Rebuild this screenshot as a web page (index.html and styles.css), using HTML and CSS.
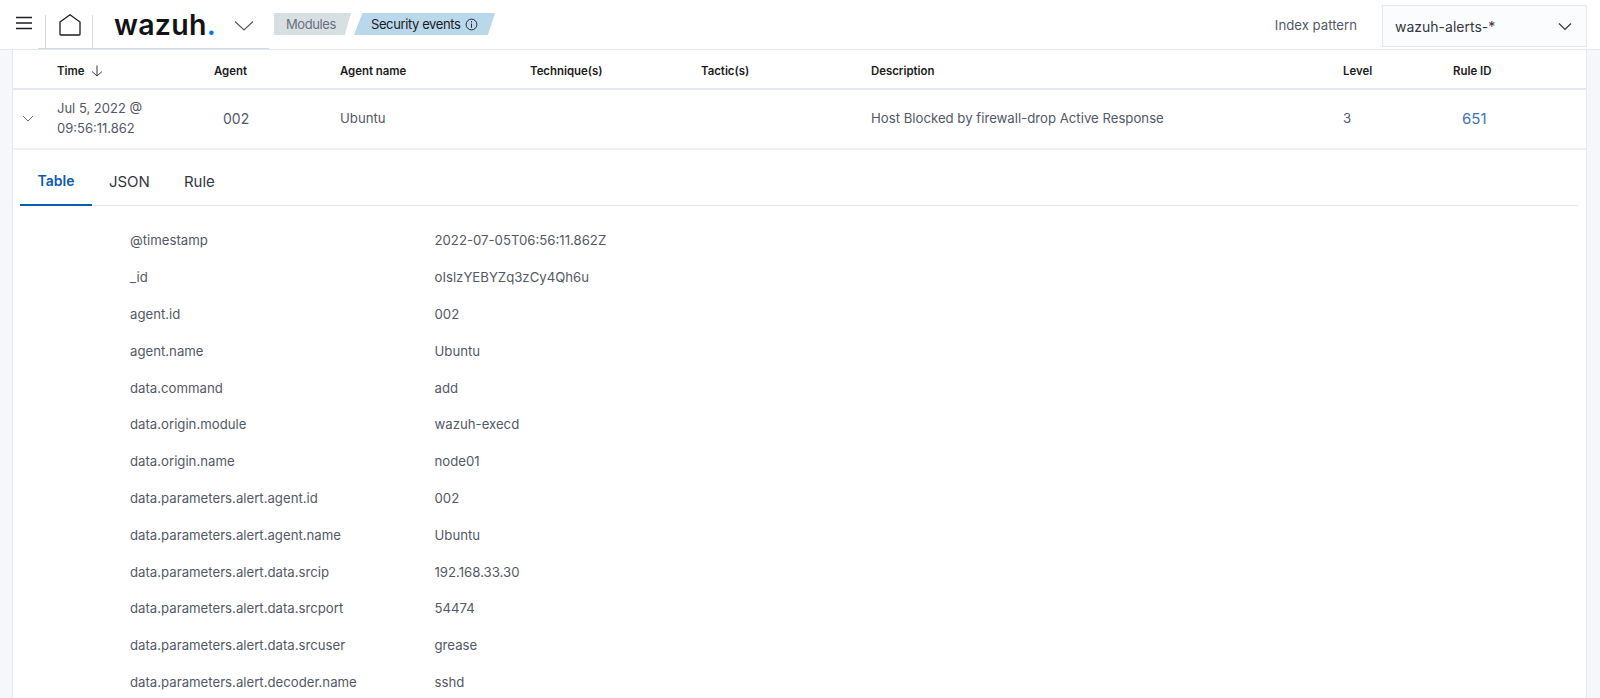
FILE: index.html
```html
<!DOCTYPE html>
<html>
<head>
  <title>Security events</title>
  <link rel="stylesheet" href="styles.css">
</head>
<body>
  <div class="header">
    <div class="header-left">
      <button class="menu-button" aria-label="Menu">
        <svg width="18" height="14" viewBox="0 0 18 14"><path d="M1 1.500h16M1 7h16M1 12.500h16" stroke="#1a1c21" stroke-width="1.700" fill="none"/></svg>
      </button>
      <div class="home-group">
        <div class="home-cell">
          <svg width="22" height="22" viewBox="0 0 22 22"><path d="M1 8 11 .8 21 8v12.200a.8.8 0 0 1-.8.8H1.800a.8.8 0 0 1-.8-.8z" stroke="#1a1c21" stroke-width="1.300" fill="none"/></svg>
        </div>
        <div class="logo-cell"><span class="logo">wazuh<span class="logo-dot">.</span></span></div>
        <svg class="logo-arrow" width="20" height="12" viewBox="0 0 20 12"><path d="M1 1.500 10 10l9-8.500" stroke="#535966" stroke-width="1.200" fill="none"/></svg>
      </div>
      <div class="crumbs">
        <span class="crumb crumb-first">Modules</span>
        <span class="crumb crumb-last">Security events
          <svg width="13" height="13" viewBox="0 0 14 14"><circle cx="7" cy="7" r="5.800" stroke="#1a1c21" fill="none"/><path d="M7 6v4.500M7 3.300v1.500" stroke="#1a1c21" fill="none"/></svg>
        </span>
      </div>
    </div>
    <div class="header-right">
      <span class="index-label">Index pattern</span>
      <div class="index-select">
        <span>wazuh-alerts-*</span>
        <svg width="14" height="9" viewBox="0 0 14 9"><path d="M1 1.500 7 7.500l6-6" stroke="#343741" stroke-width="1.200" fill="none"/></svg>
      </div>
    </div>
  </div>

  <div class="page">
    <div class="panel">
      <div class="table-row table-head">
        <div></div>
        <div class="sort-cell">Time
          <svg width="12" height="12" viewBox="0 0 12 12"><path d="M6 .5v10.500M1 6.500 6 11l5-4.500" stroke="#343741" fill="none"/></svg>
        </div>
        <div>Agent</div>
        <div>Agent name</div>
        <div>Technique(s)</div>
        <div>Tactic(s)</div>
        <div>Description</div>
        <div>Level</div>
        <div>Rule ID</div>
      </div>
      <div class="table-row table-body">
        <div class="expand-cell">
          <svg width="12" height="7" viewBox="0 0 12 7"><path d="M1 1l5 5 5-5" stroke="#69707d" fill="none"/></svg>
        </div>
        <div class="time-cell">Jul 5, 2022 @<br>09:56:11.862</div>
        <div class="agent-cell">002</div>
        <div>Ubuntu</div>
        <div></div>
        <div></div>
        <div>Host Blocked by firewall-drop Active Response</div>
        <div>3</div>
        <div class="rule-cell">651</div>
      </div>

      <div class="tabs">
        <div class="tab tab-active">Table</div>
        <div class="tab">JSON</div>
        <div class="tab">Rule</div>
      </div>

      <div class="fields">
        <div class="field"><span>@timestamp</span><span>2022-07-05T06:56:11.862Z</span></div>
        <div class="field"><span>_id</span><span>oIslzYEBYZq3zCy4Qh6u</span></div>
        <div class="field"><span>agent.id</span><span>002</span></div>
        <div class="field"><span>agent.name</span><span>Ubuntu</span></div>
        <div class="field"><span>data.command</span><span>add</span></div>
        <div class="field"><span>data.origin.module</span><span>wazuh-execd</span></div>
        <div class="field"><span>data.origin.name</span><span>node01</span></div>
        <div class="field"><span>data.parameters.alert.agent.id</span><span>002</span></div>
        <div class="field"><span>data.parameters.alert.agent.name</span><span>Ubuntu</span></div>
        <div class="field"><span>data.parameters.alert.data.srcip</span><span>192.168.33.30</span></div>
        <div class="field"><span>data.parameters.alert.data.srcport</span><span>54474</span></div>
        <div class="field"><span>data.parameters.alert.data.srcuser</span><span>grease</span></div>
        <div class="field"><span>data.parameters.alert.decoder.name</span><span>sshd</span></div>
      </div>
    </div>
  </div>
</body>
</html>
```

FILE: styles.css
```css
* {
  margin: 0;
  padding: 0;
  box-sizing: border-box;
}

html, body {
  height: 100%;
  overflow: hidden;
}

body {
  font-family: Inter, "Liberation Sans", sans-serif;
  font-size: 12px;
  color: #343741;
  background-color: #f5f7fa;
}

.header {
  height: 50px;
  display: flex;
  align-items: flex-start;
  justify-content: space-between;
  background-color: white;
  border-bottom: 1px solid #e4e7ef;
}

.header-left {
  display: flex;
  align-items: flex-start;
}

.menu-button {
  width: 45px;
  height: 49px;
  padding-left: 15px;
  padding-bottom: 3px;
  display: flex;
  align-items: center;
  background: none;
  border: none;
}

.home-group {
  width: 231px;
  height: 49px;
  margin-left: -7px;
  padding-left: 7px;
  display: flex;
  align-items: center;
  border-bottom: 1px solid #d3dae6;
}

.home-cell {
  width: 48px;
  height: 33px;
  margin-top: 15px;
  padding: 0 0 12px 13px;
  display: flex;
  align-items: flex-end;
  border-left: 1px solid #d3dae6;
  border-right: 1px solid #d3dae6;
}

.logo-cell {
  width: 147px;
  padding-left: 21px;
}

.logo {
  font-size: 28.500px;
  font-weight: 600;
  letter-spacing: 0.300px;
  color: #111317;
  line-height: 51px;
}

.logo-dot {
  color: #0079f0;
}

.logo-arrow {
  margin-left: -6px;
  margin-bottom: -3px;
}

.crumbs {
  display: flex;
  gap: 3px;
  margin-left: 5px;
  margin-top: 13px;
}

.crumb {
  height: 22px;
  display: flex;
  align-items: center;
  gap: 5px;
  font-size: 13px;
  letter-spacing: -0.400px;
}

.crumb-first {
  width: 77px;
  padding-left: 12px;
  color: #69707d;
  background-color: #d8dfe3;
  clip-path: polygon(0 0, 100% 0, 92% 100%, 0 100%);
}

.crumb-last {
  width: 141px;
  padding-left: 17px;
  color: #1a1c21;
  background-color: #b9d8eb;
  clip-path: polygon(6% 0, 100% 0, 95% 100%, 0 100%);
}

.header-right {
  display: flex;
  align-items: center;
  height: 47px;
}

.index-label {
  font-size: 13.200px;
  color: #535966;
  margin-right: 25px;
  margin-top: 2px;
}

.index-select {
  width: 205px;
  height: 42px;
  margin-right: 13px;
  margin-top: 5px;
  padding: 0 14px 0 12px;
  display: flex;
  align-items: center;
  justify-content: space-between;
  font-size: 14px;
  color: #343741;
  background-color: #fbfcfd;
  border: 1px solid #e4e7ef;
}

.page {
  padding: 0 13px 0 12px;
}

.panel {
  height: 648px;
  overflow: hidden;
  background-color: white;
  border-left: 1px solid #e4e7ef;
  border-right: 1px solid #e4e7ef;
}

.table-row {
  display: grid;
  grid-template-columns: 44px 157px 126px 190px 171px 170px 472px 110px 1fr;
  align-items: center;
}

.table-head {
  height: 40px;
  padding-top: 3px;
  font-size: 11.400px;
  font-weight: 600;
  color: #1a1c21;
  border-bottom: 2px solid #e4e7ef;
}

.sort-cell {
  display: flex;
  align-items: center;
  gap: 6px;
}

.table-body {
  height: 60px;
  padding-bottom: 2px;
  font-size: 13.200px;
  color: #535966;
  border-bottom: 2px solid #eef0f5;
}

.expand-cell {
  padding-left: 9px;
  display: flex;
}

.time-cell {
  line-height: 20px;
  font-size: 13px;
}

.agent-cell {
  padding-left: 9px;
  font-size: 14px;
}

.rule-cell {
  padding-left: 9px;
  font-size: 15px;
  color: #3f73b1;
}

.tabs {
  display: flex;
  height: 56px;
  margin: 0 8px 0 7px;
  align-items: stretch;
  border-bottom: 1px solid #e4e7ef;
}

.tab {
  padding: 22px 17px 0;
  font-size: 15px;
  color: #343741;
}

.tab-active {
  color: #0b5cad;
  font-size: 14px;
  font-weight: 600;
  padding: 22px 17.500px 0;
  border-bottom: 2px solid #0b5cad;
  margin-bottom: -1px;
}

.fields {
  padding-top: 16px;
  padding-left: 117px;
}

.field {
  display: flex;
  height: 36.800px;
  align-items: center;
  font-size: 13.200px;
  color: #535966;
}

.field span:first-child {
  width: 304.500px;
}
```
